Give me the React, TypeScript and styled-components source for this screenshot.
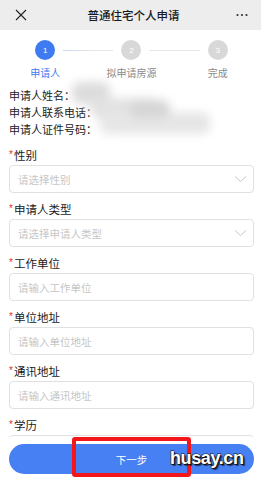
import React from 'react';
import styled, { createGlobalStyle } from 'styled-components';

const GlobalStyle = createGlobalStyle`
  html, body {
    margin: 0;
    padding: 0;
    background: #ffffff;
    overflow: hidden;
  }
  body {
    font-family: "Noto Sans CJK SC", "Noto Sans", sans-serif;
    color: #222;
  }
`;

const Page = styled.div`
  position: relative;
  width: 261px;
  height: 482px;
  overflow: hidden;
  background: #fff;
`;

const Header = styled.div`
  height: 30px;
  background: #ededed;
  display: flex;
  align-items: center;
  justify-content: space-between;
  padding: 0 12px 0 14px;
`;

const Title = styled.div`
  font-size: 11.5px;
  color: #1a1a1a;
  font-weight: 500;
  margin-left: 4px;
`;

const IconBox = styled.div`
  width: 14px;
  display: flex;
  align-items: center;
  justify-content: center;
`;

const Steps = styled.div`
  display: grid;
  grid-template-columns: repeat(3, 1fr);
  padding: 10px 0 0 2px;
  position: relative;
`;

const Step = styled.div`
  display: flex;
  flex-direction: column;
  align-items: center;
  position: relative;
`;

const Circle = styled.div<{ $active?: boolean }>`
  width: 20px;
  height: 20px;
  border-radius: 50%;
  background: ${(p) => (p.$active ? '#3f7bf0' : '#d8d8d8')};
  color: #fff;
  font-family: "Liberation Sans", sans-serif;
  font-size: 8px;
  display: flex;
  align-items: center;
  justify-content: center;
`;

const Connector = styled.div<{ $active?: boolean }>`
  position: absolute;
  top: 10px;
  left: calc(50% + 18px);
  width: calc(100% - 36px);
  height: 1px;
  background: ${(p) =>
    p.$active ? 'linear-gradient(90deg, #c9d8f0 0%, #e6e6e6 60%)' : '#e6e6e6'};
`;

const StepLabel = styled.div<{ $active?: boolean }>`
  margin-top: 6px;
  font-size: 10px;
  line-height: 14px;
  color: ${(p) => (p.$active ? '#3f7bf0' : '#8a8a8a')};
`;

const Info = styled.div`
  position: relative;
  padding: 7px 9px 0;
`;

const InfoLine = styled.div`
  font-size: 11px;
  line-height: 17px;
  color: #222;
`;

const Blur = styled.div`
  position: absolute;
  left: 70px;
  top: 2px;
  width: 150px;
  height: 58px;
  filter: blur(5px);
  pointer-events: none;
`;

const Blob = styled.div<{ $x: number; $y: number; $w: number; $h: number; $c: string }>`
  position: absolute;
  left: ${(p) => p.$x}px;
  top: ${(p) => p.$y}px;
  width: ${(p) => p.$w}px;
  height: ${(p) => p.$h}px;
  background: ${(p) => p.$c};
  border-radius: 8px;
`;

const Form = styled.div`
  padding: 9px 7px 0 9px;
`;

const Field = styled.div`
  margin-bottom: 8px;
`;

const Label = styled.div`
  font-size: 11.5px;
  line-height: 16px;
  color: #1a1a1a;
  margin-bottom: 2px;
  display: flex;
  align-items: center;
`;

const Star = styled.span`
  color: #e2312d;
  font-size: 10px;
  margin-right: 1px;
  font-family: "Liberation Sans", sans-serif;
`;

const Box = styled.div`
  height: 28px;
  box-sizing: border-box;
  border: 1px solid #e1e1e1;
  border-radius: 4px;
  padding: 0 6px 0 8px;
  display: flex;
  align-items: center;
  justify-content: space-between;
  font-size: 10.5px;
  color: #c6c6c6;
`;

const BottomBar = styled.div`
  position: absolute;
  left: 0;
  right: 0;
  bottom: 0;
  height: 45px;
  background: #fff;
  padding: 7px 7px 0 9px;
  box-sizing: border-box;
`;

const NextButton = styled.div`
  height: 30px;
  border-radius: 15px;
  background: #4780f2;
  color: #fff;
  font-size: 10.5px;
  display: flex;
  align-items: center;
  justify-content: center;
`;

const Highlight = styled.div`
  position: absolute;
  left: 72px;
  top: 437px;
  width: 119px;
  height: 40px;
  box-sizing: border-box;
  border: 4px solid #f3171b;
  border-radius: 3px;
`;

const Watermark = styled.div`
  position: absolute;
  left: 170px;
  top: 446px;
  font-family: "Liberation Sans", sans-serif;
  font-weight: 700;
  font-size: 18px;
  line-height: 24px;
  color: #fff;
  letter-spacing: -0.4px;
  -webkit-text-stroke: 1px #111;
  paint-order: stroke fill;
  text-shadow: 1px 1px 0 #111, 2px 2px 1px rgba(0, 0, 0, 0.6);
`;

const Chevron = () => (
  <svg width="13" height="8" viewBox="0 0 13 8">
    <path d="M1 1.5 L6.5 6.5 L12 1.5" fill="none" stroke="#c8c8c8" strokeWidth="1" />
  </svg>
);

const fields: { label: string; placeholder: string; select?: boolean }[] = [
  { label: '性别', placeholder: '请选择性别', select: true },
  { label: '申请人类型', placeholder: '请选择申请人类型', select: true },
  { label: '工作单位', placeholder: '请输入工作单位' },
  { label: '单位地址', placeholder: '请输入单位地址' },
  { label: '通讯地址', placeholder: '请输入通讯地址' },
  { label: '学历', placeholder: '请选择学历', select: true },
];

const steps = ['申请人', '拟申请房源', '完成'];

export default function App() {
  return (
    <Page>
      <GlobalStyle />
      <Header>
        <IconBox>
          <svg width="12" height="12" viewBox="0 0 12 12">
            <path d="M1 1 L11 11 M11 1 L1 11" stroke="#222" strokeWidth="1.1" />
          </svg>
        </IconBox>
        <Title>普通住宅个人申请</Title>
        <IconBox>
          <svg width="12" height="4" viewBox="0 0 12 4">
            <circle cx="1.5" cy="2" r="1.1" fill="#333" />
            <circle cx="6" cy="2" r="1.1" fill="#333" />
            <circle cx="10.5" cy="2" r="1.1" fill="#333" />
          </svg>
        </IconBox>
      </Header>

      <Steps>
        {steps.map((s, i) => (
          <Step key={s}>
            <Circle $active={i === 0}>{i + 1}</Circle>
            {i < 2 && <Connector $active={i === 0} />}
            <StepLabel $active={i === 0}>{s}</StepLabel>
          </Step>
        ))}
      </Steps>

      <Info>
        <InfoLine>申请人姓名：</InfoLine>
        <InfoLine>申请人联系电话：</InfoLine>
        <InfoLine>申请人证件号码：</InfoLine>
        <Blur>
          <Blob $x={2} $y={0} $w={38} $h={22} $c="#dcdcdc" />
          <Blob $x={20} $y={16} $w={70} $h={20} $c="#e2e2e2" />
          <Blob $x={30} $y={30} $w={110} $h={22} $c="#e6e6e6" />
          <Blob $x={60} $y={18} $w={40} $h={18} $c="#d6d6d6" />
        </Blur>
      </Info>

      <Form>
        {fields.map((f) => (
          <Field key={f.label}>
            <Label>
              <Star>*</Star>
              {f.label}
            </Label>
            <Box>
              <span>{f.placeholder}</span>
              {f.select && <Chevron />}
            </Box>
          </Field>
        ))}
      </Form>

      <BottomBar>
        <NextButton>下一步</NextButton>
      </BottomBar>
      <Highlight />
      <Watermark>husay.cn</Watermark>
    </Page>
  );
}
